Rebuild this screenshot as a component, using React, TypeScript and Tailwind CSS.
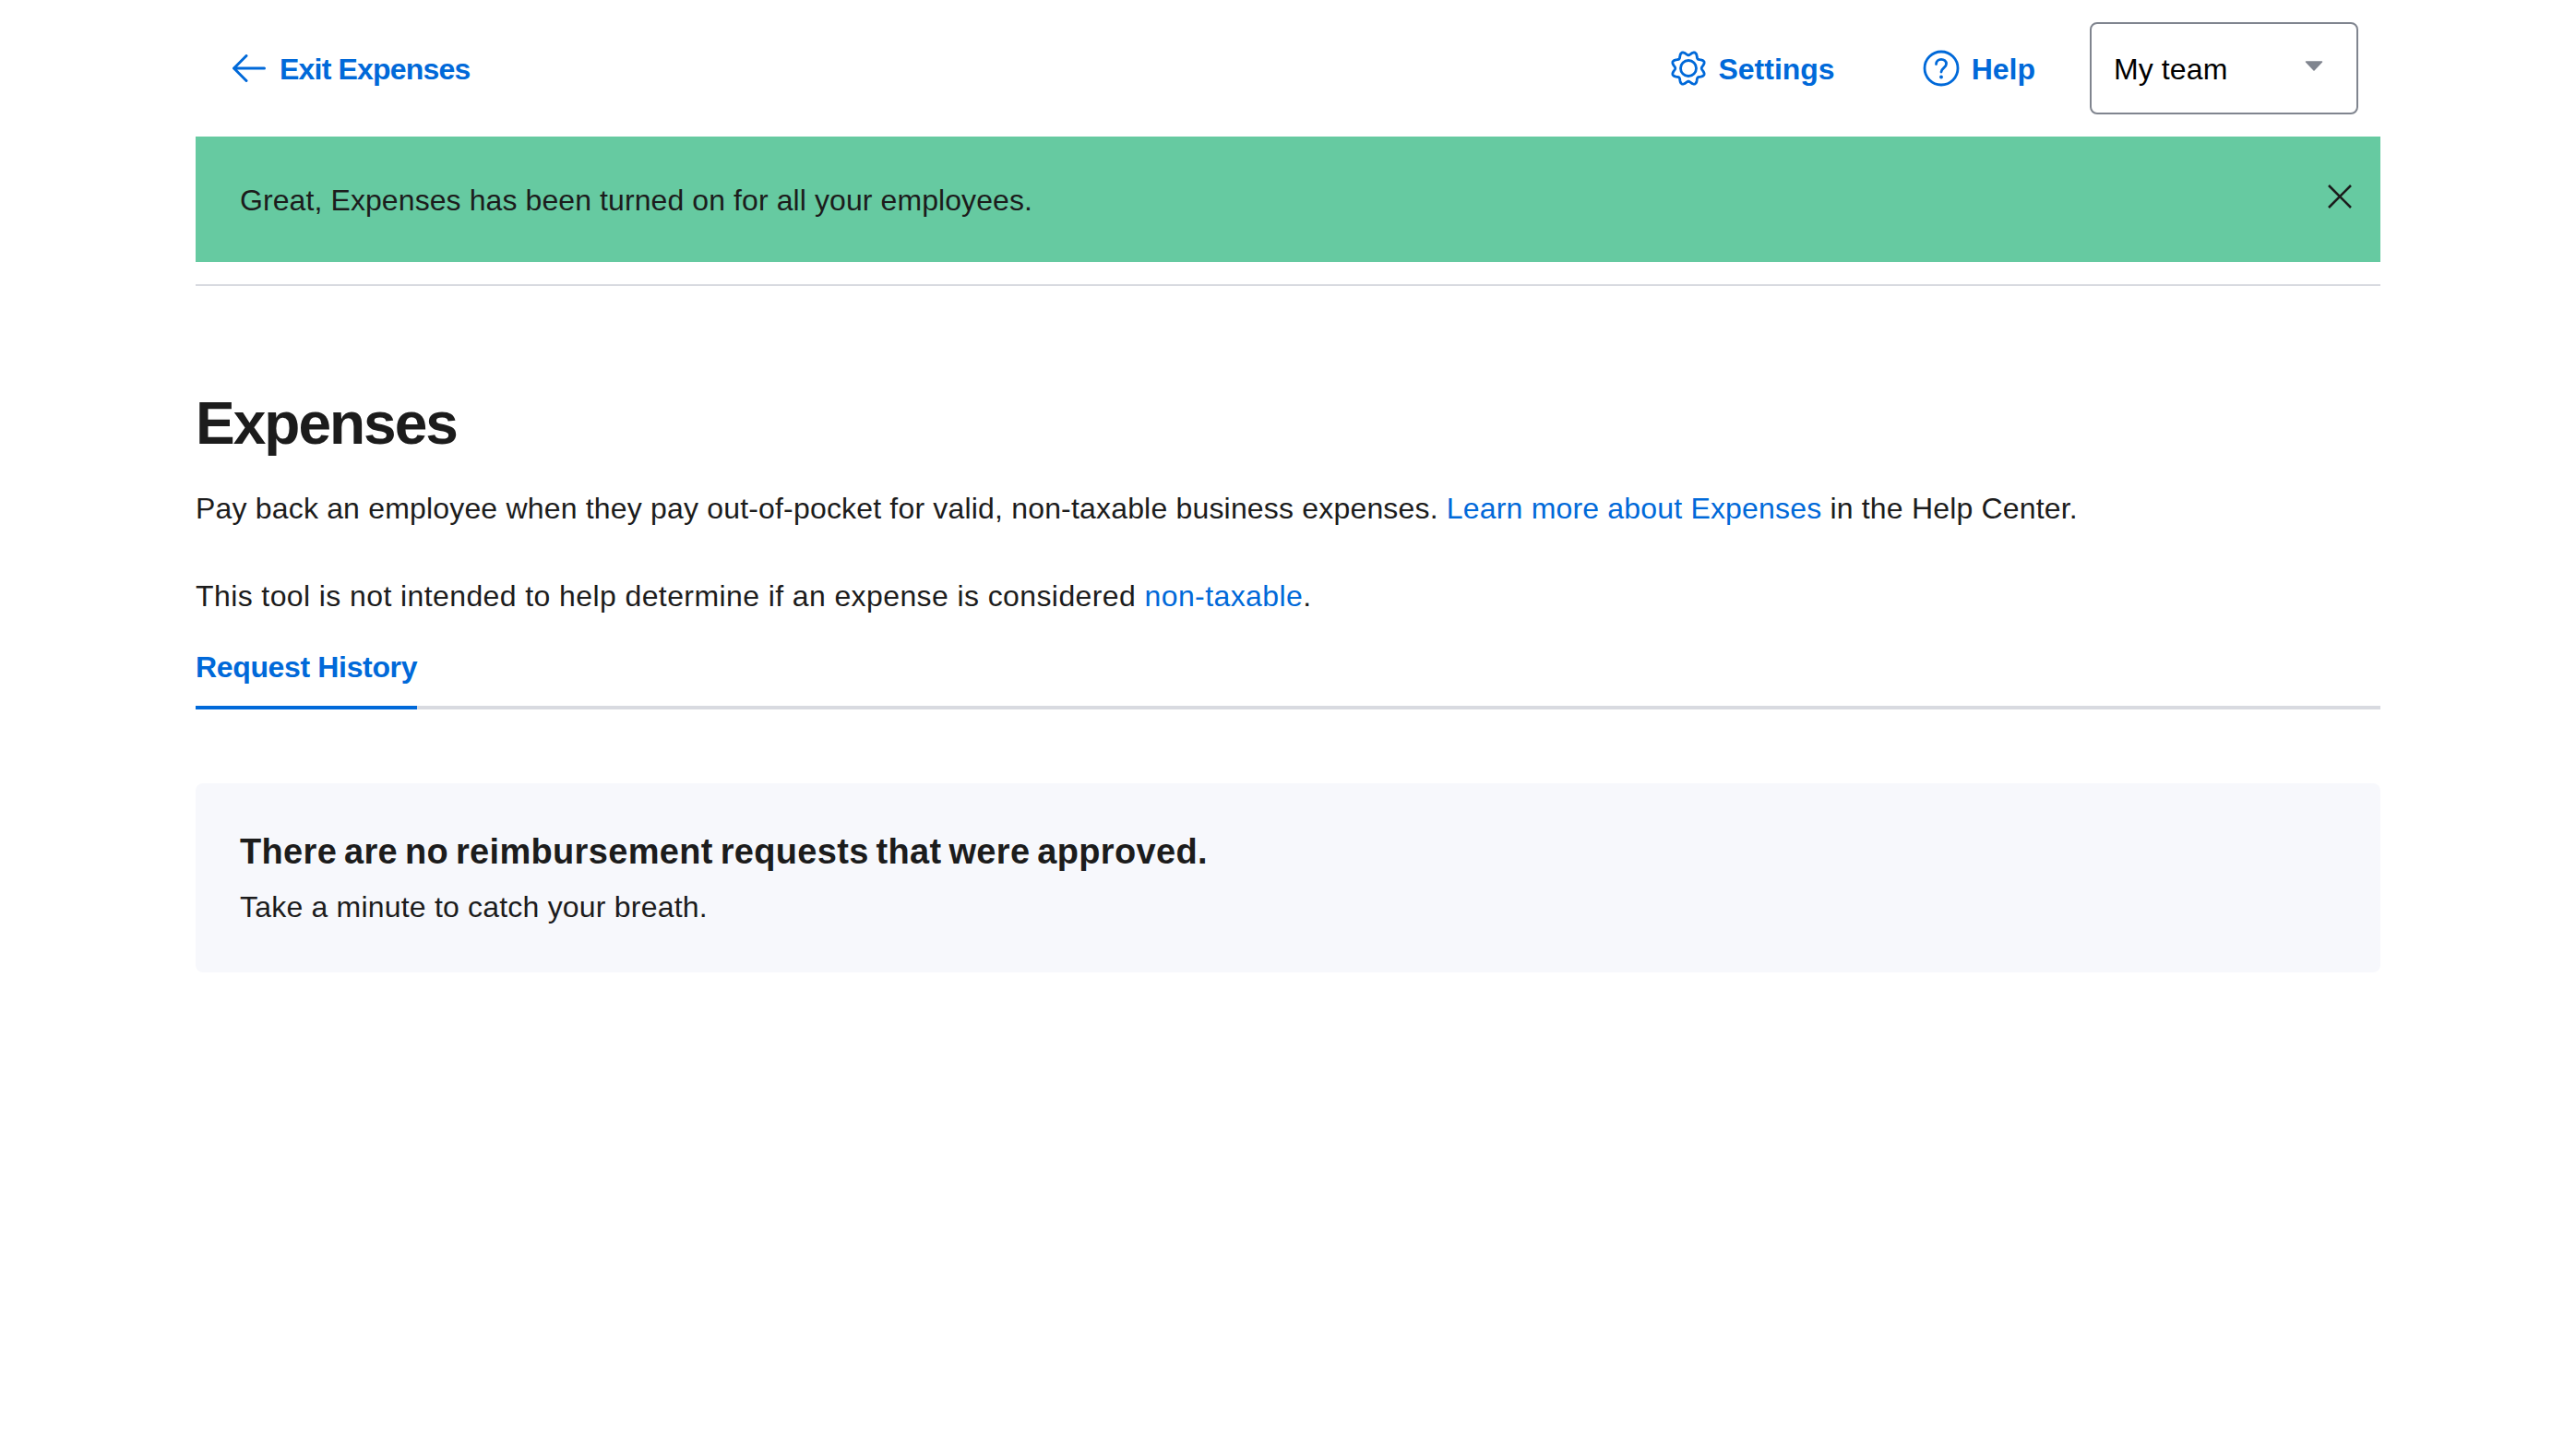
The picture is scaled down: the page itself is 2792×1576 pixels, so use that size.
import React from 'react';

const blue = 'text-[#0069d9]';

// 8 lobes, wavy outline like the reference gear
const gearPath = (() => {
  const pts: string[] = [];
  for (let i = 0; i < 96; i++) {
    const a = (i / 96) * Math.PI * 2;
    const r = 16.3 - 2.1 * Math.cos(8 * a);
    const x = 20 + r * Math.sin(a);
    const y = 20 - r * Math.cos(a);
    pts.push(`${i === 0 ? 'M' : 'L'}${x.toFixed(2)} ${y.toFixed(2)}`);
  }
  return pts.join('') + 'Z';
})();

function ArrowIcon() {
  return (
    <svg viewBox="0 0 36 30" className="w-[36px] h-[30px]" fill="none" stroke="#0069d9" strokeWidth="3" strokeLinecap="round" strokeLinejoin="round">
      <path d="M15 1.500 1.500 15 15 28.500M2 15h32.500" />
    </svg>
  );
}

function GearIcon() {
  return (
    <svg viewBox="0 0 40 40" className="w-[40px] h-[40px] ml-[1px]" fill="none" stroke="#0069d9" strokeWidth="2.800" strokeLinejoin="round">
      <circle cx="20" cy="20" r="8.500" />
      <path d={gearPath} />
    </svg>
  );
}

function HelpIcon() {
  return (
    <svg viewBox="0 0 40 40" className="w-[40px] h-[40px]" fill="none" stroke="#0069d9" strokeWidth="2.800">
      <circle cx="20" cy="20" r="18" />
      <path d="M14.500 15.500c0-3.200 2.500-5.200 5.500-5.200s5.500 2 5.500 4.900c0 4.300-5.500 4.500-5.500 8.800" strokeLinecap="round" />
      <circle cx="20" cy="29.500" r="1.900" fill="#0069d9" stroke="none" />
    </svg>
  );
}

export default function App() {
  return (
    <div className="min-h-[1576px] bg-white px-[212px] text-[#1c1c1c] font-['Liberation_Sans',sans-serif] text-[32px]">
      {/* Top nav */}
      <div className="h-[148px] flex items-center justify-between pl-[40px] pr-[24px]">
        <a className={`flex items-center gap-[15px] font-bold ${blue}`}>
          <ArrowIcon />
          <span className="mt-[2px] tracking-[-0.8px]">Exit Expenses</span>
        </a>
        <div className="flex items-center">
          <a className={`flex items-center gap-[12px] font-bold ${blue}`}>
            <GearIcon />
            <span className="mt-[2px]">Settings</span>
          </a>
          <a className={`flex items-center gap-[13px] font-bold ml-[95px] ${blue}`}>
            <HelpIcon />
            <span className="mt-[2px]">Help</span>
          </a>
          <div className="ml-[59px] w-[291px] h-[100px] border-2 border-[#80858f] rounded-[8px] flex items-center justify-between pl-[24px] pr-[36px]">
            <span className="mt-[2px] text-black tracking-[0.1px]">My team</span>
            <svg viewBox="0 0 20 11" className="w-[20px] h-[11px] mb-[6px]" fill="#80858f" stroke="#80858f" strokeWidth="1.500" strokeLinejoin="round">
              <path d="M1.500 1h17L10 10z" />
            </svg>
          </div>
        </div>
      </div>

      {/* Success banner */}
      <div className="h-[136px] bg-[#66caa1] flex items-center justify-between pl-[48px] pr-[31px]">
        <span className="mt-[2px] tracking-[0.09px]">Great, Expenses has been turned on for all your employees.</span>
        <svg viewBox="0 0 26 26" className="w-[26px] h-[26px] mb-[6px]" fill="none" stroke="#1c1c1c" strokeWidth="2.600">
          <path d="M1 1l24 24M25 1 1 25" />
        </svg>
      </div>
      <div className="mt-[24px] h-[2px] bg-[#d8dae0]" />

      <h1 className="mt-[111px] text-[64px] leading-[76px] font-bold tracking-[-2px]">Expenses</h1>
      <p className="mt-[30px] leading-[48px] tracking-[0.18px]">
        Pay back an employee when they pay out-of-pocket for valid, non-taxable business expenses.{' '}
        <a className={blue}>Learn more about Expenses</a> in the Help Center.
      </p>
      <p className="mt-[47px] leading-[48px] tracking-[0.4px]">
        This tool is not intended to help determine if an expense is considered <a className={blue}>non-taxable</a>.
      </p>

      {/* Tabs */}
      <div className="mt-[29px] border-b-4 border-[#d8dae0] flex">
        <div className={`-mb-[4px] pb-[18px] border-b-4 border-[#0069d9] font-bold leading-[48px] tracking-[-0.35px] ${blue}`}>Request History</div>
      </div>

      {/* Empty state */}
      <div className="mt-[80px] h-[205px] bg-[#f7f8fc] rounded-[8px] px-[48px] pt-[50px]">
        <div className="text-[38px] leading-[48px] font-bold tracking-[0.33px] [word-spacing:-3px]">There are no reimbursement requests that were approved.</div>
        <div className="mt-[12px] leading-[48px] tracking-[0.2px]">Take a minute to catch your breath.</div>
      </div>
    </div>
  );
}
